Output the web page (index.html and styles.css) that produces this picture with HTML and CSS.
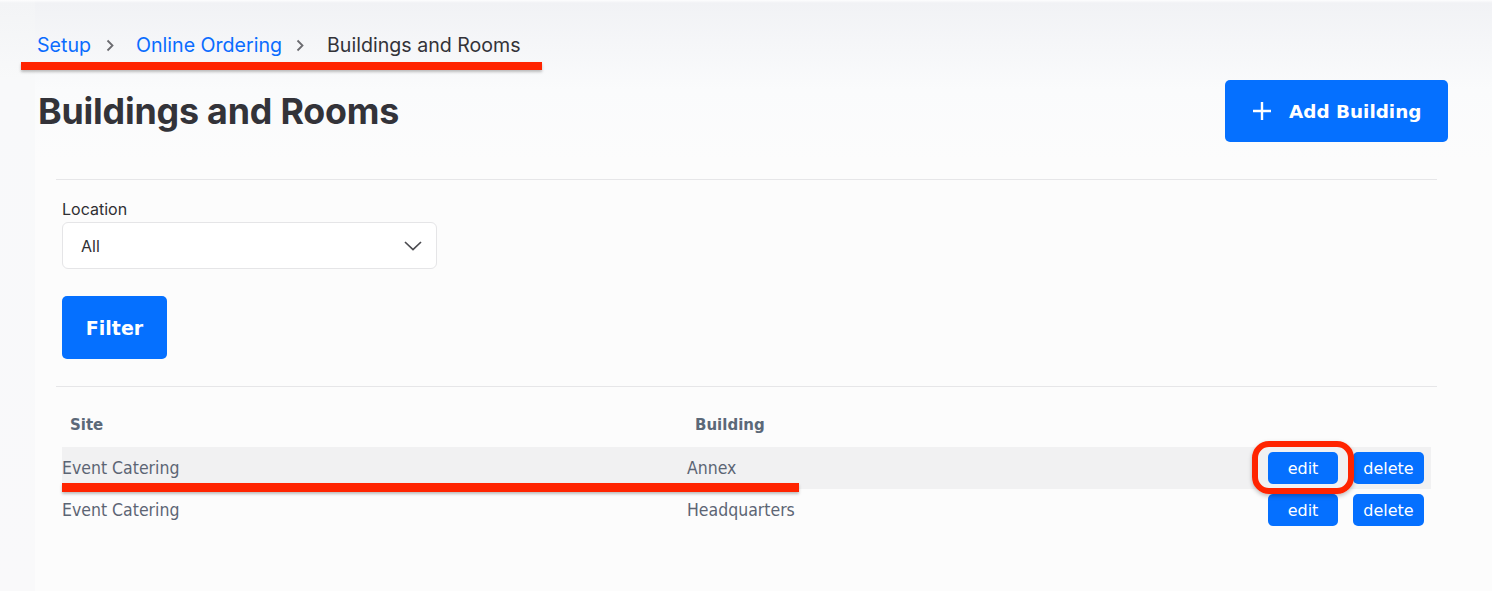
FILE: index.html
```html
<!DOCTYPE html>
<html>
<head>
<meta charset="utf-8">
<link rel="stylesheet" href="styles.css">
</head>
<body>
<div class="page">
  <nav class="breadcrumb">
    <a class="crumb-link" href="#">Setup</a>
    <svg class="chev chev-1" width="8" height="13" viewBox="0 0 8 13"><path d="M1.5 1.5 L6.5 6.5 L1.5 11.5" fill="none" stroke="#6b6b70" stroke-width="1.8"/></svg>
    <a class="crumb-link" href="#">Online Ordering</a>
    <svg class="chev chev-2" width="8" height="13" viewBox="0 0 8 13"><path d="M1.5 1.5 L6.5 6.5 L1.5 11.5" fill="none" stroke="#6b6b70" stroke-width="1.8"/></svg>
    <span class="crumb-current">Buildings and Rooms</span>
  </nav>

  <header class="title-row">
    <h1 class="title">Buildings and Rooms</h1>
    <button class="btn btn-add">
      <svg width="20" height="20" viewBox="0 0 20 20"><path d="M10 1 V19 M1 10 H19" stroke="#fff" stroke-width="2.4" fill="none"/></svg>
      <span>Add Building</span>
    </button>
  </header>

  <hr class="divider divider-top">

  <section class="filters">
    <label class="field-label">Location</label>
    <div class="select">
      <span>All</span>
      <svg width="18" height="10" viewBox="0 0 18 10"><path d="M1 1 L9 8.5 L17 1" fill="none" stroke="#4a4a4f" stroke-width="1.7"/></svg>
    </div>
    <button class="btn btn-filter">Filter</button>
  </section>

  <hr class="divider divider-bottom">

  <table class="grid">
    <thead>
      <tr><th class="col-site">Site</th><th class="col-building">Building</th><th></th></tr>
    </thead>
    <tbody>
      <tr class="row-alt">
        <td>Event Catering</td><td>Annex</td>
        <td class="actions"><button class="mini">edit</button><button class="mini">delete</button></td>
      </tr>
      <tr>
        <td>Event Catering</td><td>Headquarters</td>
        <td class="actions"><button class="mini">edit</button><button class="mini">delete</button></td>
      </tr>
    </tbody>
  </table>

  <div class="mark mark-crumb"></div>
  <div class="mark mark-row"></div>
  <div class="ring"></div>
</div>
</body>
</html>
```

FILE: styles.css
```css
* { box-sizing: border-box; }
html, body { margin: 0; padding: 0; }
body {
  background: linear-gradient(#fdfdfe 0, #f3f4f6 3px, #f8f9fa 80px, #f9f9fa 100%);
  font-family: Inter, "Noto Sans", sans-serif;
  width: 1492px;
  height: 591px;
  overflow: hidden;
}
.page {
  position: relative;
  margin-left: 35px;
  height: 591px;
  background: linear-gradient(#fdfdfe 0, #f1f2f5 3px, #fafbfc 90px, #fcfcfc 160px);
}
.breadcrumb {
  display: flex;
  align-items: center;
  padding: 30px 0 0 2px;
  height: 60px;
  font-size: 19.6px;
  line-height: 30px;
}
.crumb-link { color: #0a6cff; text-decoration: none; }
.crumb-current { color: #333338; }
.chev-1 { margin: 0 22px 0 15px; }
.chev-2 { margin: 0 23px 0 14px; }

.title-row {
  display: flex;
  justify-content: space-between;
  align-items: center;
  margin-top: 20px;
  padding: 0 44px 0 3px;
}
.title {
  margin: 0;
  font-size: 35.8px;
  font-weight: 700;
  color: #333339;
  letter-spacing: -0.2px;
}
.btn {
  border: 0;
  border-radius: 5px;
  background: #0570ff;
  color: #fff;
  font-family: "DejaVu Sans", Verdana, sans-serif;
  font-weight: 700;
  cursor: pointer;
}
.btn-add {
  display: flex;
  align-items: center;
  gap: 17px;
  width: 223px;
  height: 62px;
  padding: 0 0 0 27px;
  font-size: 18.4px;
}
.divider {
  border: 0;
  border-top: 1px solid #e6e6e8;
  margin: 0 55px 0 21px;
}
.divider-top { margin-top: 37px; }
.filters {
  display: flex;
  flex-direction: column;
  align-items: flex-start;
  padding: 19px 0 0 27px;
}
.field-label {
  font-size: 16px;
  line-height: 20px;
  color: #2f2f33;
}
.select {
  margin-top: 3px;
  width: 375px;
  height: 47px;
  display: flex;
  align-items: center;
  justify-content: space-between;
  padding: 0 14px 0 18px;
  background: #fff;
  border: 1px solid #e5e5e7;
  border-radius: 6px;
  font-size: 16px;
  color: #2f2f33;
}
.btn-filter {
  margin-top: 27px;
  width: 105px;
  height: 63px;
  font-size: 19px;
}
.divider-bottom { margin-top: 27px; }

.grid {
  margin: 16px 0 0 27px;
  width: 1369px;
  border-collapse: collapse;
  font-family: "DejaVu Sans Condensed", "DejaVu Sans", sans-serif;
}
.grid th {
  height: 44px;
  text-align: left;
  padding: 0 0 0 8px;
  font-family: "DejaVu Sans", sans-serif;
  font-weight: 700;
  font-size: 15px;
  color: #5b6878;
}
.col-site { width: 625px; }
.grid td {
  height: 42px;
  padding: 0;
  font-size: 17.5px;
  color: #5c6574;
}
.row-alt td { background: #f1f1f2; }
.actions {
  text-align: right;
  padding-right: 7px !important;
  white-space: nowrap;
}
.mini {
  height: 32px;
  border: 0;
  border-radius: 5px;
  background: #0570ff;
  color: #fff;
  font-family: "DejaVu Sans", sans-serif;
  font-size: 16px;
  padding: 0;
  vertical-align: middle;
}
.mini:first-child { width: 70px; margin-right: 15px; }
.mini:last-child { width: 71px; }

.mark {
  position: absolute;
  background: #ff2400;
  box-shadow: 0 2px 3px rgba(0,0,0,0.25);
}
.mark-crumb { left: -14px; top: 62px; width: 521px; height: 8px; }
.mark-row { left: 27px; top: 483px; width: 737px; height: 9px; }
.ring {
  position: absolute;
  left: 1217px;
  top: 441px;
  width: 102px;
  height: 53px;
  border: 6px solid #ff2400;
  border-radius: 17px;
  box-shadow: 0 2px 4px rgba(0,0,0,0.25);
}
```
